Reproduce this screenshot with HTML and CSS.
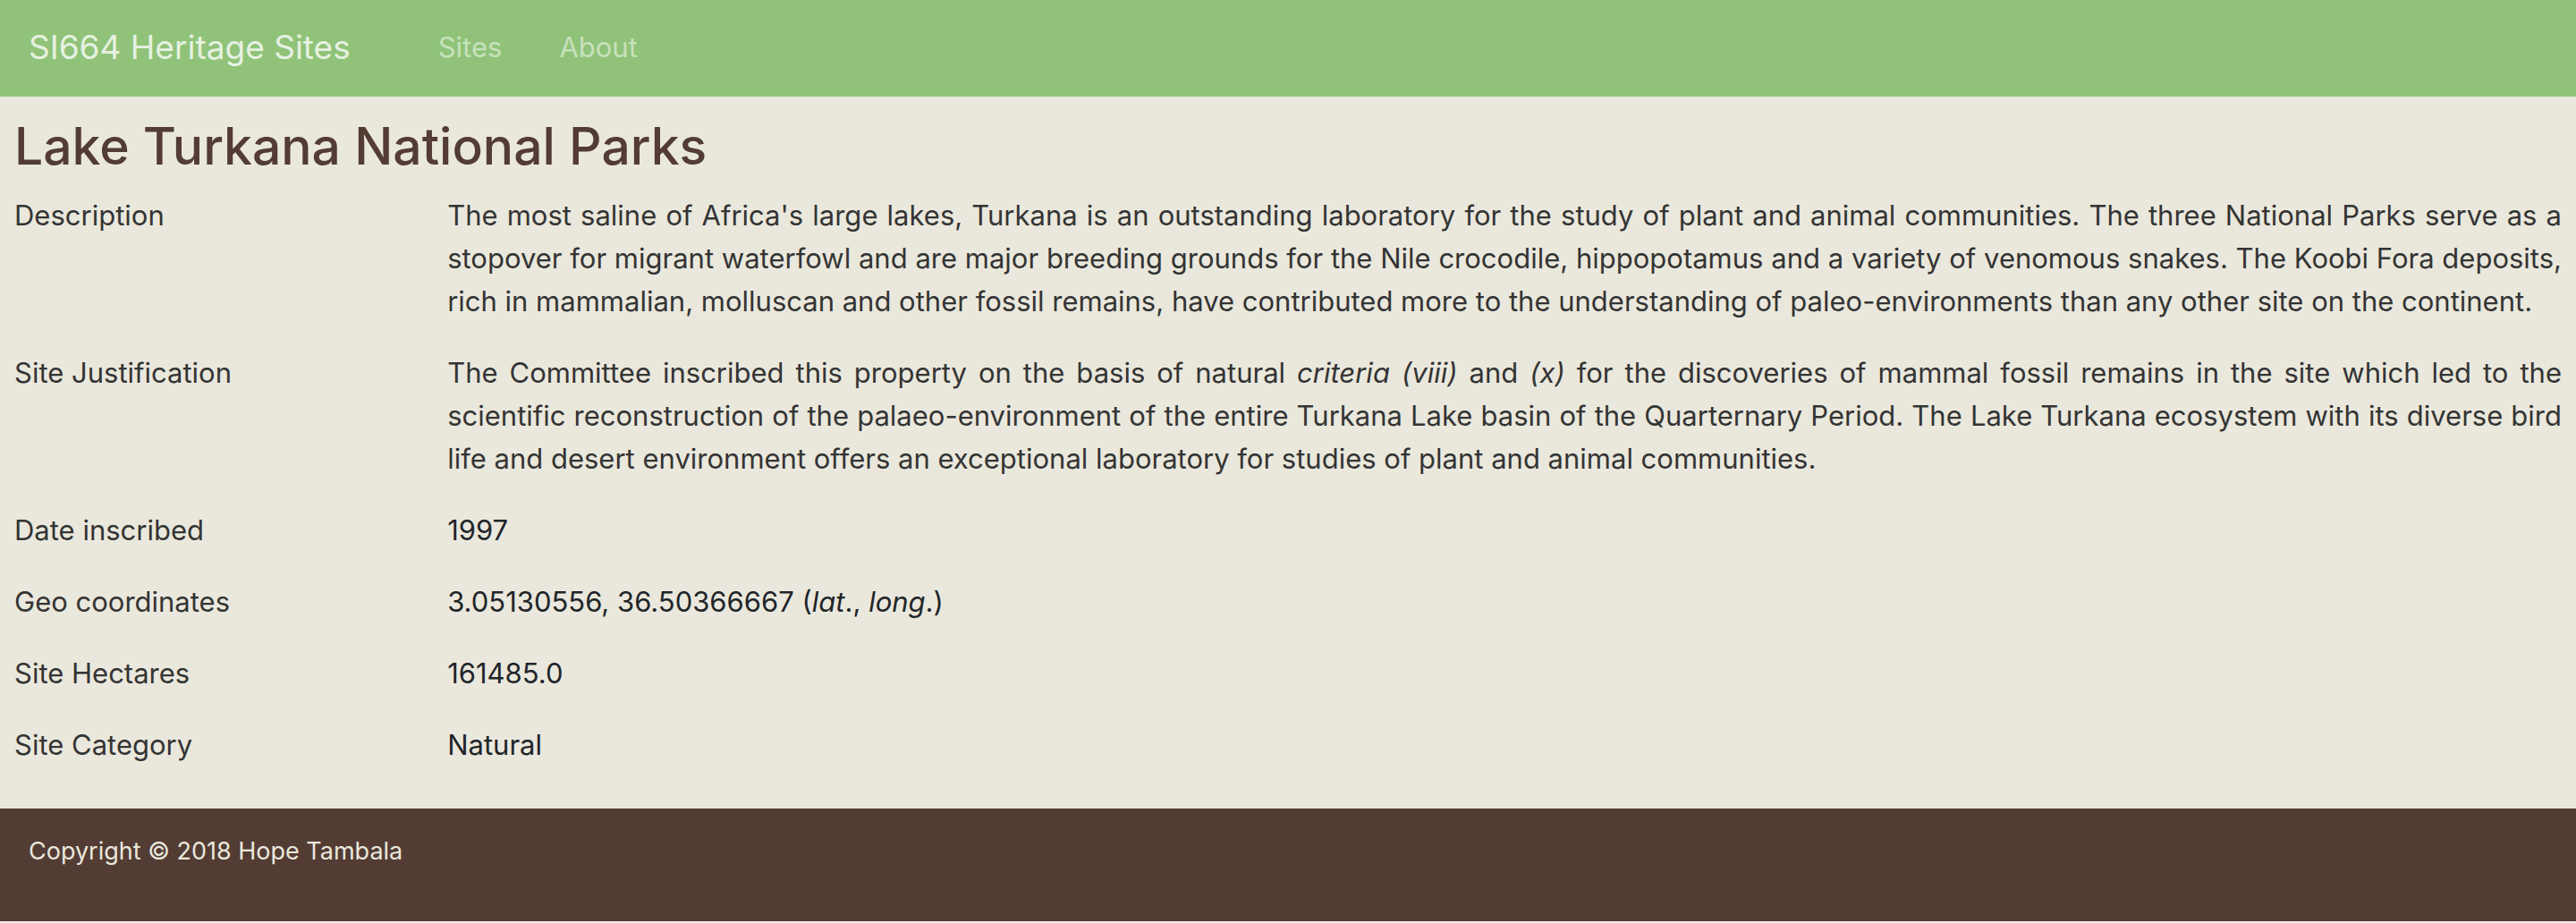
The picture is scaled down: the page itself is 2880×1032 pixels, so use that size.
FILE: index.html
```
<!DOCTYPE html>
<html lang="en">
<head>
<meta charset="utf-8">
<meta name="viewport" content="width=device-width, initial-scale=1">
<title>SI664 Heritage Sites</title>
<link rel="stylesheet" href="styles.css">
</head>
<body>
<header>
<nav class="navbar">
<a class="brand" href="#">SI664 Heritage Sites</a>
<ul class="nav-list">
<li><a href="#">Sites</a></li>
<li><a href="#">About</a></li>
</ul>
</nav>
</header>
<main class="content">
<h1>Lake Turkana National Parks</h1>
<dl class="details">
<dt>Description</dt>
<dd class="prose">The most saline of Africa's large lakes, Turkana is an outstanding laboratory for the study of plant and animal communities. The three National Parks serve as a stopover for migrant waterfowl and are major breeding grounds for the Nile crocodile, hippopotamus and a variety of venomous snakes. The Koobi Fora deposits, rich in mammalian, molluscan and other fossil remains, have contributed more to the understanding of paleo-environments than any other site on the continent.</dd>
<dt>Site Justification</dt>
<dd class="prose">The Committee inscribed this property on the basis of natural <em>criteria (viii)</em> and <em>(x)</em> for the discoveries of mammal fossil remains in the site which led to the scientific reconstruction of the palaeo-environment of the entire Turkana Lake basin of the Quarternary Period. The Lake Turkana ecosystem with its diverse bird life and desert environment offers an exceptional laboratory for studies of plant and animal communities.</dd>
<dt>Date inscribed</dt>
<dd>1997</dd>
<dt>Geo coordinates</dt>
<dd>3.05130556, 36.50366667 (<em>lat</em>., <em>long</em>.)</dd>
<dt>Site Hectares</dt>
<dd>161485.0</dd>
<dt>Site Category</dt>
<dd>Natural</dd>
</dl>
</main>
<footer class="footer">
<p>Copyright © 2018 Hope Tambala</p>
</footer>
</body>
</html>
```
FILE: styles.css
```
* {
  box-sizing: border-box;
}

body {
  margin: 0;
  background: #efebe4;
  color: #212529;
  font-family: Inter, "Liberation Sans", sans-serif;
  font-size: 31px;
  line-height: 48px;
}

.navbar {
  display: flex;
  align-items: center;
  gap: 98px;
  padding: 23px 32px 25px;
  background: #90c379;
  line-height: 60px;
}

.navbar a {
  color: rgba(255, 255, 255, 0.5);
  text-decoration: none;
}

.navbar .brand {
  color: rgba(255, 255, 255, 0.8);
  font-size: 37px;
}

.nav-list {
  display: flex;
  gap: 64px;
  margin: 0;
  padding: 0;
  list-style: none;
}

.content {
  padding: 18px 16px 47px;
  background: #eae8dc;
}

h1 {
  margin: 0 0 15px;
  color: #533c34;
  font-size: 57px;
  font-weight: 500;
  line-height: 76px;
}

.details {
  display: grid;
  grid-template-columns: 17fr 83fr;
  row-gap: 32px;
  margin: 0;
}

dt {
  color: #343434;
}

dd {
  margin: 0;
}

.prose {
  color: #343434;
  text-align: justify;
}

.footer {
  padding: 24px 32px 54px;
  background: #533c34;
  color: #eae8dc;
  font-size: 27px;
}

.footer p {
  margin: 0;
}
```
